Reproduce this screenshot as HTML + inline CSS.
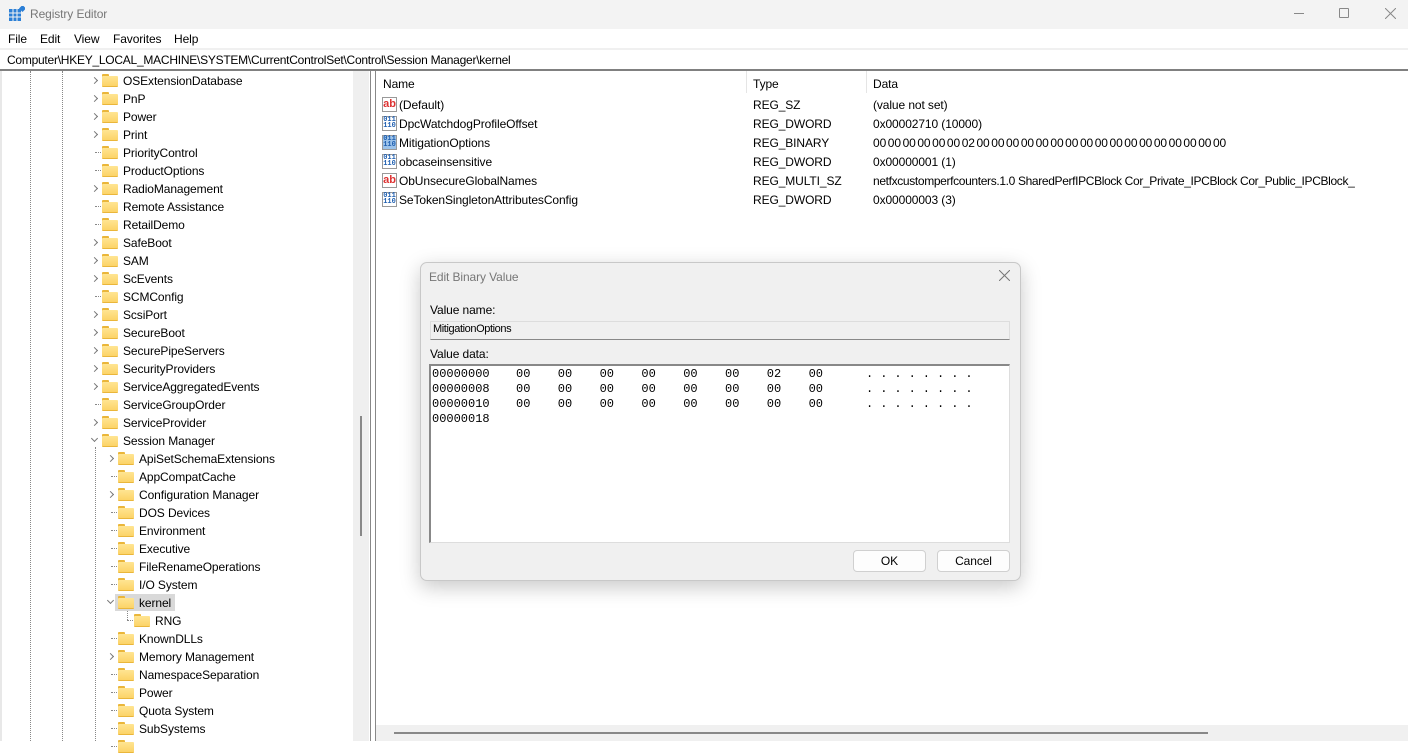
<!DOCTYPE html>
<html><head><meta charset="utf-8"><style>
*{margin:0;padding:0;box-sizing:border-box}
body{width:1408px;height:741px;overflow:hidden;background:#fff;font-family:"Liberation Sans",sans-serif;font-size:12px;letter-spacing:-0.1px;color:#000;position:relative}
.a{position:absolute;white-space:nowrap}
.f{position:absolute;width:16px;height:12px}
.f:before{content:"";position:absolute;left:0;top:0;width:7px;height:3px;background:#eab63a;border-radius:1px 1px 0 0}
.f:after{content:"";position:absolute;left:0;top:2px;width:16px;height:10px;background:linear-gradient(#ffe592,#fcd368);border-bottom:1px solid #eab63a;border-radius:1px}
.ch{position:absolute;width:5px;height:5px;border-right:1.3px solid #777;border-bottom:1.3px solid #777}
.r{transform:rotate(-45deg)}
.d{transform:rotate(45deg)}
.hd{position:absolute;border-top:1px dotted #888;width:6px}
.vd{position:absolute;border-left:1px dotted #888}
.mono{font-family:"Liberation Mono",monospace;font-size:12px;letter-spacing:0}
</style></head><body>
<div class="a" style="left:0;top:0;width:1408px;height:29px;background:#f3f3f3"></div>
<svg class="a" style="left:9px;top:6px" width="16" height="16"><rect x="0" y="3" width="12" height="12" fill="#2b7fd6"/><g stroke="#f3f3f3" stroke-width="1"><line x1="4" y1="3" x2="4" y2="15"/><line x1="8" y1="3" x2="8" y2="15"/><line x1="0" y1="7" x2="12" y2="7"/><line x1="0" y1="11" x2="12" y2="11"/></g><rect x="11" y="0" width="5" height="5" fill="#2b7fd6" transform="rotate(45 13.5 2.5)"/></svg>
<div class="a" style="left:30px;top:7px;color:#777;font-size:12px">Registry Editor</div>
<div class="a" style="left:1294px;top:13px;width:10px;border-top:1px solid #888"></div>
<div class="a" style="left:1339px;top:8px;width:10px;height:10px;border:1px solid #888;border-radius:1px"></div>
<svg class="a" style="left:1385px;top:8px" width="11" height="11"><path d="M0 0L11 11M11 0L0 11" stroke="#888" stroke-width="1"/></svg>
<div class="a" style="left:8px;top:32px">File</div>
<div class="a" style="left:40px;top:32px">Edit</div>
<div class="a" style="left:74px;top:32px">View</div>
<div class="a" style="left:113px;top:32px">Favorites</div>
<div class="a" style="left:174px;top:32px">Help</div>
<div class="a" style="left:0;top:48px;width:1408px;height:2px;background:#f0f0f0"></div>
<div class="a" style="left:7px;top:53px;letter-spacing:-0.25px">Computer\HKEY_LOCAL_MACHINE\SYSTEM\CurrentControlSet\Control\Session Manager\kernel</div>
<div class="a" style="left:0;top:69px;width:1408px;height:2px;background:#808080"></div>
<div class="a" style="left:0;top:71px;width:2px;height:670px;background:#e8e8e8"></div>
<div class="vd" style="left:30px;top:71px;height:670px"></div>
<div class="vd" style="left:62px;top:71px;height:670px"></div>
<div class="vd" style="left:95px;top:447px;height:294px"></div>
<div class="a" style="left:353px;top:71px;width:16px;height:670px;background:#efefef"></div>
<div class="a" style="left:360px;top:416px;width:2px;height:120px;background:#888"></div>
<div class="a" style="left:370px;top:71px;width:1px;height:670px;background:#888"></div>
<div class="a" style="left:375px;top:71px;width:1px;height:670px;background:#888"></div>
<div id="tree"></div>
<div class="a" style="left:383px;top:77px">Name</div>
<div class="a" style="left:746px;top:71px;width:1px;height:22px;background:#e5e5e5"></div>
<div class="a" style="left:753px;top:77px">Type</div>
<div class="a" style="left:866px;top:71px;width:1px;height:22px;background:#e5e5e5"></div>
<div class="a" style="left:873px;top:77px">Data</div>
<div id="vals"></div>
<div class="a" style="left:376px;top:725px;width:1032px;height:16px;background:#f0f0f0"></div>
<div class="a" style="left:394px;top:732px;width:814px;height:2px;background:#888"></div>
<div class="a" style="left:420px;top:262px;width:601px;height:319px;background:#f0f0f0;border:1px solid #c8c8c8;border-radius:7px;box-shadow:0 6px 20px rgba(0,0,0,.22)"></div>
<div class="a" style="left:429px;top:270px;color:#777">Edit Binary Value</div>
<svg class="a" style="left:999px;top:270px" width="11" height="11"><path d="M0 0L11 11M11 0L0 11" stroke="#777" stroke-width="1"/></svg>
<div class="a" style="left:430px;top:303px">Value name:</div>
<div class="a" style="left:430px;top:321px;width:580px;height:19px;background:#f0f0f0;border:1px solid #ddd;border-bottom:1px solid #888"></div>
<div class="a" style="left:433px;top:323px;font-size:11px;letter-spacing:-.4px">MitigationOptions</div>
<div class="a" style="left:430px;top:347px">Value data:</div>
<div class="a" style="left:429px;top:364px;width:581px;height:179px;background:#fff;border:1px solid #ddd;border-top:2px solid #888;border-left:2px solid #888"></div>
<div id="hex"></div>
<div class="a" style="left:853px;top:550px;width:73px;height:22px;background:#fdfdfd;border:1px solid #d0d0d0;border-radius:4px;text-align:center;line-height:20px">OK</div>
<div class="a" style="left:937px;top:550px;width:73px;height:22px;background:#fdfdfd;border:1px solid #d0d0d0;border-radius:4px;text-align:center;line-height:20px">Cancel</div>
<script>
var T=[["OSExtensionDatabase",0,1],["PnP",0,1],["Power",0,1],["Print",0,1],["PriorityControl",0,0],["ProductOptions",0,0],["RadioManagement",0,1],["Remote Assistance",0,0],["RetailDemo",0,0],["SafeBoot",0,1],["SAM",0,1],["ScEvents",0,1],["SCMConfig",0,0],["ScsiPort",0,1],["SecureBoot",0,1],["SecurePipeServers",0,1],["SecurityProviders",0,1],["ServiceAggregatedEvents",0,1],["ServiceGroupOrder",0,0],["ServiceProvider",0,1],["Session Manager",0,2],
["ApiSetSchemaExtensions",1,1],["AppCompatCache",1,0],["Configuration Manager",1,1],["DOS Devices",1,0],["Environment",1,0],["Executive",1,0],["FileRenameOperations",1,0],["I/O System",1,0],["kernel",1,2],["RNG",2,0],["KnownDLLs",1,0],["Memory Management",1,1],["NamespaceSeparation",1,0],["Power",1,0],["Quota System",1,0],["SubSystems",1,0],["",1,0]];
var h="";T.forEach(function(t,i){var y=71+18*i,x=102+16*t[1];
if(t[0]=="kernel")h+='<div class="a" style="left:115px;top:'+(y+1)+'px;width:60px;height:17px;background:#d9d9d9"></div>';
if(t[2]==1)h+='<div class="ch r" style="left:'+(x-10)+'px;top:'+(y+7)+'px"></div>';
else if(t[2]==2)h+='<div class="ch d" style="left:'+(x-10)+'px;top:'+(y+5)+'px"></div>';
else h+='<div class="hd" style="left:'+(x-7)+'px;top:'+(y+9)+'px"></div>';
if(t[1]==2)h+='<div class="vd" style="left:'+(x-7)+'px;top:'+(y)+'px;height:9px"></div>';
h+='<div class="f" style="left:'+x+'px;top:'+(y+3)+'px"></div><div class="a" style="left:'+(x+21)+'px;top:'+(y+3)+'px">'+t[0]+'</div>';});
document.getElementById("tree").innerHTML=h;
var V=[["(Default)","REG_SZ","(value not set)",0],["DpcWatchdogProfileOffset","REG_DWORD","0x00002710 (10000)",1],["MitigationOptions","REG_BINARY","00 00 00 00 00 00 02 00 00 00 00 00 00 00 00 00 00 00 00 00 00 00 00 00",2],["obcaseinsensitive","REG_DWORD","0x00000001 (1)",1],["ObUnsecureGlobalNames","REG_MULTI_SZ","netfxcustomperfcounters.1.0 SharedPerfIPCBlock Cor_Private_IPCBlock Cor_Public_IPCBlock_",0],["SeTokenSingletonAttributesConfig","REG_DWORD","0x00000003 (3)",1]];
h="";V.forEach(function(v,i){var y=96+19*i;
if(v[3]==0)h+='<div class="a" style="left:382px;top:'+(y+1)+'px;width:15px;height:15px;border:1px solid #999;background:#fff;color:#d33;font-weight:bold;font-size:11px;line-height:12px;text-align:center">ab</div>';
else h+='<div class="a mono" style="left:382px;top:'+(y+1)+'px;width:15px;height:15px;border:1px solid #999;background:'+(v[3]==2?'#9cc3ea':'#fff')+';color:#1f5fb0;font-size:7px;line-height:6px;text-align:center;font-weight:bold">011<br>110</div>';
var ws=v[3]==2?'word-spacing:-1.6px;':'';
h+='<div class="a" style="left:399px;top:'+(y+2)+'px">'+v[0]+'</div><div class="a" style="left:753px;top:'+(y+2)+'px">'+v[1]+'</div><div class="a" style="left:873px;top:'+(y+2)+'px;'+ws+(v[3]==0&&i==4?'letter-spacing:-0.35px;':'')+'">'+v[2]+'</div>';});
document.getElementById("vals").innerHTML=h;
var R=[["00000000",["00","00","00","00","00","00","02","00"]],["00000008",["00","00","00","00","00","00","00","00"]],["00000010",["00","00","00","00","00","00","00","00"]],["00000018",[]]];
h="";R.forEach(function(r,i){var y=367+15*i;h+='<div class="a mono" style="left:432px;top:'+y+'px">'+r[0]+'</div>';
r[1].forEach(function(b,j){h+='<div class="a mono" style="left:'+(516+41.8*j)+'px;top:'+y+'px">'+b+'</div>';});
if(r[1].length)for(var k=0;k<8;k++)h+='<div class="a mono" style="left:'+(866+14.2*k)+'px;top:'+y+'px">.</div>';});
document.getElementById("hex").innerHTML=h;
</script>
</body></html>
